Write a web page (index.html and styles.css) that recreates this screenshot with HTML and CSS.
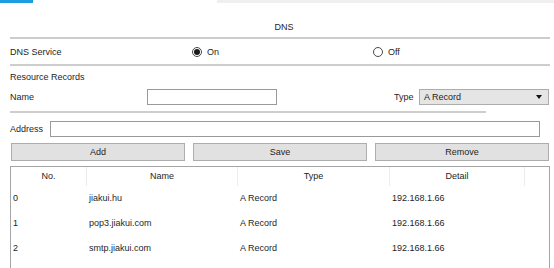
FILE: index.html
```html
<!DOCTYPE html>
<html lang="en">
<head>
    <meta charset="UTF-8">
    <meta name="viewport" content="width=device-width, initial-scale=1.0">
    <title>DNS</title>
    <link rel="stylesheet" href="styles.css">
</head>
<body>

<div class="tabs">
  <div class="tab-active"></div>
  <div class="tab-rest"></div>
</div>

<div class="panel">
  <div class="title">DNS</div>
  <div class="rule"></div>

  <div class="service-row">
    <span class="service-label">DNS Service</span>
    <label class="radio-item on-item"><span class="radio checked"></span>On</label>
    <label class="radio-item"><span class="radio"></span>Off</label>
  </div>
  <div class="rule"></div>

  <div class="section-label">Resource Records</div>

  <div class="name-row">
    <span class="name-label">Name</span>
    <div class="text-input name-input"></div>
    <span class="type-label">Type</span>
    <div class="select">
      <span>A Record</span>
      <span class="arrow"></span>
    </div>
  </div>
  <div class="rule short"></div>

  <div class="address-row">
    <span class="address-label">Address</span>
    <div class="text-input address-input"></div>
  </div>

  <div class="buttons">
    <button class="btn">Add</button>
    <button class="btn">Save</button>
    <button class="btn">Remove</button>
  </div>

  <div class="table">
    <div class="thead">
      <div class="th">No.</div>
      <div class="th">Name</div>
      <div class="th">Type</div>
      <div class="th">Detail</div>
      <div class="th last"></div>
    </div>
    <div class="tr">
      <div class="td">0</div>
      <div class="td">jiakui.hu</div>
      <div class="td">A Record</div>
      <div class="td">192.168.1.66</div>
      <div class="td"></div>
    </div>
    <div class="tr">
      <div class="td">1</div>
      <div class="td">pop3.jiakui.com</div>
      <div class="td">A Record</div>
      <div class="td">192.168.1.66</div>
      <div class="td"></div>
    </div>
    <div class="tr">
      <div class="td">2</div>
      <div class="td">smtp.jiakui.com</div>
      <div class="td">A Record</div>
      <div class="td">192.168.1.66</div>
      <div class="td"></div>
    </div>
  </div>
</div>

</body>
</html>
```

FILE: styles.css
```css
/*RESETS*/

html, body {
    margin: 0;
    padding: 0;
    background: #fff;
}

body {
    width: 554px;
    height: 268px;
    overflow: hidden;
    font-family: "Liberation Sans", Arial, sans-serif;
    font-size: 9px;
    color: #1e1e1e;
}

/*TABS*/

.tabs {
    display: flex;
    height: 3px;
}

.tab-active {
    width: 33px;
    background-color: #1b9de0;
}

.tab-rest {
    margin-left: 184px;
    flex: 1;
    background-color: #efefef;
}

/*PANEL*/

.panel {
    padding: 0 4px 0 10px;
}

.title {
    height: 34px;
    line-height: 12px;
    padding-top: 18px;
    box-sizing: border-box;
    text-align: center;
    padding-left: 8px;
}

.rule {
    height: 2px;
    width: 540px;
    background-color: #cdcdcd;
}

.rule.short {
    width: 476px;
    margin-top: 6px;
}

.service-row {
    display: flex;
    align-items: center;
    height: 25px;
}

.service-label {
    width: 182px;
}

.radio-item {
    display: flex;
    align-items: center;
    gap: 5px;
}

.on-item {
    width: 181px;
}

.radio {
    width: 8px;
    height: 8px;
    border: 1px solid #4a4a4a;
    border-radius: 50%;
    display: flex;
    align-items: center;
    justify-content: center;
}

.radio.checked::after {
    content: "";
    width: 6px;
    height: 6px;
    border-radius: 50%;
    background-color: #1a1a1a;
}

.section-label {
    height: 23px;
    line-height: 23px;
}

.name-row {
    display: flex;
    align-items: center;
    height: 16px;
}

.name-label {
    width: 137px;
}

.text-input {
    height: 14px;
    border: 1px solid #9a9a9a;
    background: #fff;
}

.name-input {
    width: 128px;
}

.type-label {
    margin-left: 117px;
    width: 25px;
}

.select {
    width: 118px;
    height: 14px;
    border: 1px solid #acacac;
    background-color: #e5e5e5;
    display: flex;
    align-items: center;
    justify-content: space-between;
    padding: 0 6px 0 4px;
}

.arrow {
    width: 0;
    height: 0;
    border-left: 3px solid transparent;
    border-right: 3px solid transparent;
    border-top: 4px solid #111;
}

.address-row {
    display: flex;
    align-items: center;
    height: 16px;
    margin-top: 8px;
}

.address-label {
    width: 40px;
}

.address-input {
    width: 488px;
}

/*BUTTONS*/

.buttons {
    display: flex;
    gap: 8px;
    margin-top: 6px;
    padding-left: 1px;
}

.btn {
    width: 174px;
    height: 18px;
    padding: 0;
    border: 1px solid #adadad;
    background-color: #e1e1e1;
    font-family: "Liberation Sans", Arial, sans-serif;
    font-size: 9px;
    color: #1e1e1e;
}

/*TABLE*/

.table {
    margin-top: 5px;
    width: 538px;
    height: 110px;
    border: 1px solid #a5a5a5;
    border-bottom: none;
}

.thead, .tr {
    display: grid;
    grid-template-columns: 76px 151px 152px 135px 1fr;
}

.thead {
    height: 19px;
}

.th {
    text-align: center;
    line-height: 19px;
    border-right: 1px solid #ececec;
}

.th.last {
    border-right: none;
}

.tr {
    height: 25px;
    line-height: 25px;
}

.td {
    padding-left: 2px;
}
```
